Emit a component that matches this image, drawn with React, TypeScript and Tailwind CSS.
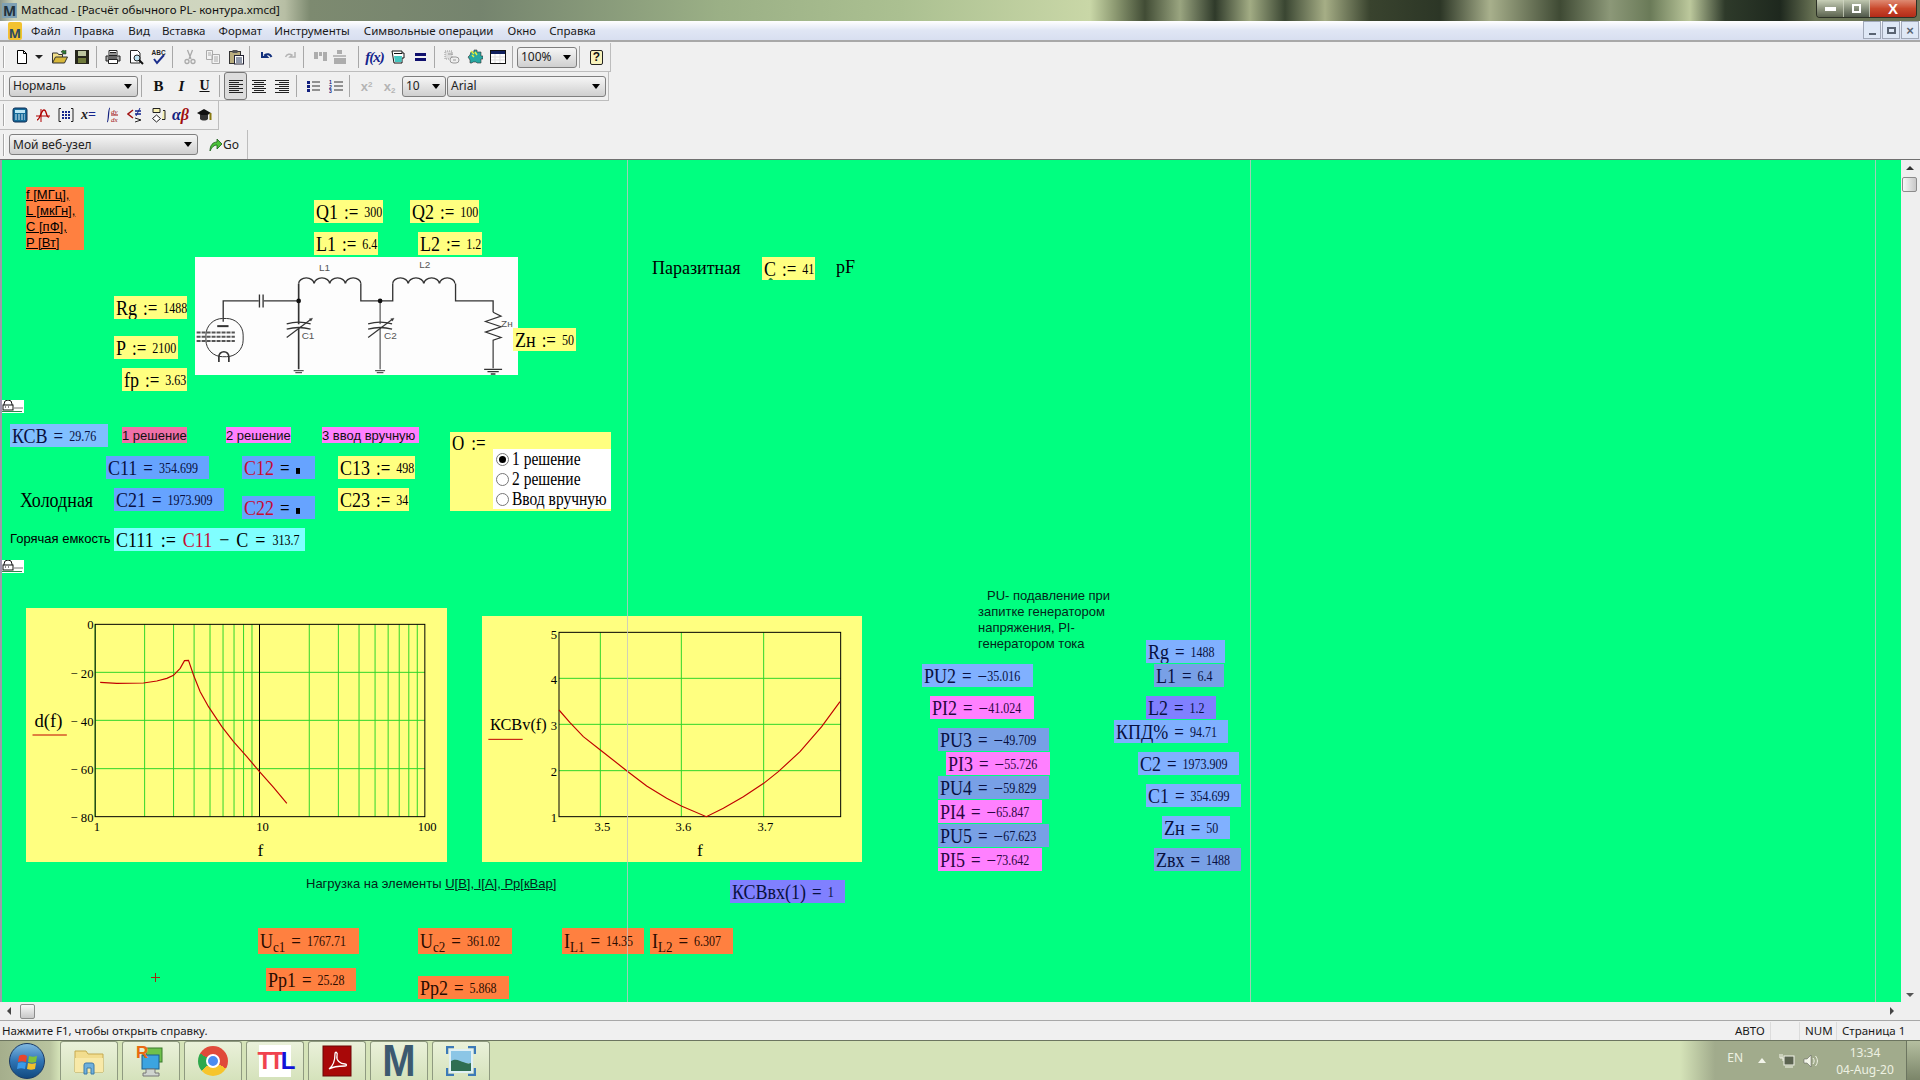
import type { ReactNode } from "react";

const serif = "font-['Liberation_Serif',serif]";
const ui = "font-['Noto_Sans',sans-serif]";
const arial = "font-['Liberation_Sans',Arial,sans-serif]";

function Ico({ children, w = 16, h = 16 }: { children: ReactNode; w?: number; h?: number }) {
  return (
    <svg width={w} height={h} viewBox={`0 0 ${w} ${h}`} className="block">
      {children}
    </svg>
  );
}

function Tool({ children, w = "w-[23px]", className = "" }: { children: ReactNode; w?: string; className?: string }) {
  return <div className={`flex h-full shrink-0 items-center justify-center ${w} ${className}`}>{children}</div>;
}

function Sep({ className = "" }: { className?: string }) {
  return <div className={`h-[22px] w-px shrink-0 self-center bg-[#a8a8a8] ${className}`} />;
}

function Grip() {
  return <div className="ml-[3px] h-[22px] w-[2px] shrink-0 self-center border-l border-[#a8a8a8] bg-white" />;
}

function Combo({ label, className }: { label: string; className: string }) {
  return (
    <div className={`flex h-[21px] shrink-0 items-center justify-between self-center rounded-[3px] border border-[#7f7f7f] bg-gradient-to-b from-[#f6f6f6] to-[#cfcfcf] pl-[3px] pr-[5px] text-[12px] text-[#222] ${ui} ${className}`}>
      <span>{label}</span>
      <span className="h-0 w-0 border-x-[4px] border-t-[5px] border-x-transparent border-t-black" />
    </div>
  );
}

function AlignLines({ mode }: { mode: "l" | "c" | "r" }) {
  const rows = [14, 10, 14, 10, 14, 10, 14];
  return (
    <Ico>
      {rows.map((len, i) => {
        const x = mode === "l" ? 1 : mode === "c" ? 8 - len / 2 : 15 - len;
        return <rect key={i} x={x} y={2 + i * 2} width={len} height={1} fill="#222" />;
      })}
    </Ico>
  );
}

function Toolbars() {
  return (
    <div className="flex h-[117px] shrink-0 flex-col bg-[#f0f0f0] pt-px">
      <div className="flex h-[29px] w-[611px] border-b border-r border-[#bdbdbd]">
        <Grip />
        <Tool className="ml-[5px]">
          <Ico><path d="M3.5 1.5h6l3 3v10h-9z" fill="#fff" stroke="#000" /><path d="M9.5 1.5v3h3" fill="none" stroke="#000" /></Ico>
        </Tool>
        <Tool w="w-[12px]"><span className="h-0 w-0 border-x-[4px] border-t-[4px] border-x-transparent border-t-[#222]" /></Tool>
        <Tool className="ml-[3px]">
          <Ico><path d="M0.5 14V4h5l1 1.5h4V8" fill="#f2e08a" stroke="#333" /><path d="M0.5 14l3-6h12l-3 6z" fill="#d8b83a" stroke="#333" /><path d="M9 3c1-2 3-2 4-1l1-1v4h-4l1.500-1c-1-.5-1.500-.5-2.500-1z" fill="#2e7d32" stroke="#222" strokeWidth=".5" /></Ico>
        </Tool>
        <Tool w="w-[22px]">
          <Ico><rect x="1" y="1" width="14" height="14" fill="#26261c" /><rect x="4" y="2" width="8" height="5" fill="#bdc6a0" /><rect x="4" y="9" width="8" height="5" fill="#6f7a3c" /></Ico>
        </Tool>
        <Sep className="ml-[3px]" />
        <Tool className="ml-[4px]">
          <Ico><path d="M4 1.500h8v5H4z" fill="#fff" stroke="#222" /><path d="M1 7h14v5H1z" fill="#aaa" stroke="#222" /><path d="M3.500 10.500h9v4h-9z" fill="#fff" stroke="#222" /><path d="M3 9h9M5 3.500h6M5 5h6" stroke="#222" /></Ico>
        </Tool>
        <Tool>
          <Ico><path d="M2.500 1.500h7l2.500 2.500v10h-9.500z" fill="#fff" stroke="#222" /><circle cx="9" cy="9" r="3" fill="#bfe4f2" stroke="#222" /><path d="M11 11l4 4" stroke="#111" strokeWidth="2" /></Ico>
        </Tool>
        <Tool>
          <Ico><text x="0.500" y="6" fontSize="6.500" fontWeight="700" fill="#222" fontFamily="Liberation Sans">ABC</text><path d="M3 10l3 4 7-8" fill="none" stroke="#1c2f8c" strokeWidth="2" /></Ico>
        </Tool>
        <Sep className="ml-[2px]" />
        <Tool className="ml-[5px]">
          <Ico><path d="M5.500 1l3.500 9M10.500 1L7 10" stroke="#aaa" strokeWidth="1.300" /><circle cx="5" cy="12.500" r="2" fill="none" stroke="#aaa" strokeWidth="1.300" /><circle cx="11" cy="12.500" r="2" fill="none" stroke="#aaa" strokeWidth="1.300" /></Ico>
        </Tool>
        <Tool>
          <Ico><path d="M1.500 1.500h6v9h-6zM7 5.500h7.500v9H7z" fill="#f3f3f3" stroke="#aaa" /><path d="M3 4h3M3 6h3M9 8h4M9 10h4M9 12h4" stroke="#aaa" /></Ico>
        </Tool>
        <Tool>
          <Ico><rect x="1.500" y="2.500" width="11" height="12" fill="#b9ad7e" stroke="#333" /><rect x="4.500" y="1" width="5" height="3" fill="#555" /><rect x="6.500" y="6.500" width="9" height="8.500" fill="#fff" stroke="#223" /><path d="M8 9h6M8 11h6M8 13h6" stroke="#235" /></Ico>
        </Tool>
        <Sep className="ml-[2px]" />
        <Tool className="ml-[5px]">
          <Ico><path d="M3 3v5h5L6 6c2-1.500 5-1 6.500 2" fill="none" stroke="#12307c" strokeWidth="2" /></Ico>
        </Tool>
        <Tool>
          <Ico><path d="M13 3v5H8l2-2C8 4.500 5 5 3.500 8" fill="none" stroke="#b4b4b4" strokeWidth="1.500" /></Ico>
        </Tool>
        <Sep className="ml-[2px]" />
        <Tool className="ml-[5px]">
          <Ico><rect x="1" y="3" width="4" height="7" fill="#adadad" /><rect x="6" y="3" width="3" height="4" fill="#adadad" /><rect x="10" y="3" width="4" height="9" fill="#adadad" /></Ico>
        </Tool>
        <Tool w="w-[16px]">
          <Ico><rect x="5" y="1" width="5" height="4" fill="#adadad" /><rect x="1" y="6" width="13" height="2" fill="#bcbcbc" /><rect x="2" y="9" width="12" height="6" fill="#adadad" /></Ico>
        </Tool>
        <Sep className="ml-[10px]" />
        <Tool className="ml-[4px]">
          <span className={`text-[15px] font-bold italic leading-none tracking-[-1px] text-[#14248c] ${serif}`}>f(x)</span>
        </Tool>
        <Tool>
          <Ico><path d="M2 2h10v2h2v5h-2v5H4z" fill="#fff" stroke="#111" /><path d="M4 7h8l-.5 6H5z" fill="#44c6c0" /><path d="M4 4.500h8" stroke="#111" /></Ico>
        </Tool>
        <Tool>
          <Ico><rect x="2" y="4" width="11" height="3" fill="#10106e" /><rect x="2" y="9" width="11" height="3" fill="#10106e" /></Ico>
        </Tool>
        <Sep className="ml-[2px]" />
        <Tool className="ml-[5px]">
          <Ico><path d="M1 2h7v8H1z" fill="#ddd" stroke="#999" strokeDasharray="1 1" /><rect x="6" y="8" width="9" height="6" rx="3" fill="#eee" stroke="#999" /><path d="M4 5h5M9 11h3" stroke="#999" /></Ico>
        </Tool>
        <Tool>
          <Ico><path d="M4 3h3V1h3v2h4v4h2v3h-2v4h-4l-1-1H6l-1 1H3v-3L1 8l2-2z" fill="#27a7a2" stroke="#333" strokeWidth=".6" /><path d="M4 2l3 3M8 3l2 3M5 6l2 2" stroke="#e8ef3a" strokeWidth="1.400" /></Ico>
        </Tool>
        <Tool>
          <Ico><rect x="0.500" y="1.500" width="15" height="13" fill="#fff" stroke="#111" /><rect x="1" y="2" width="14" height="3" fill="#10205e" /><path d="M1 8h14M1 11h14M5 5v9M10 5v9" stroke="#ddd" /></Ico>
        </Tool>
        <Sep className="ml-[3px]" />
        <Combo label="100%" className="ml-[4px] w-[60px]" />
        <Sep className="ml-[2px]" />
        <Tool className="ml-[5px]">
          <div className={`flex h-[15px] w-[13px] items-center justify-center rounded-[2px] border border-[#222] bg-[#f7f2bc] text-[12px] font-bold leading-none text-[#111] ${arial}`}>?</div>
        </Tool>
      </div>

      <div className="flex h-[29px] w-[609px] border-b border-r border-[#bdbdbd]">
        <Grip />
        <Combo label="Нормаль" className="ml-[4px] w-[129px]" />
        <Sep className="ml-[3px]" />
        <Tool className="ml-[5px]"><span className={`text-[15px] font-bold leading-none text-[#111] ${serif}`}>B</span></Tool>
        <Tool><span className={`text-[15px] font-bold italic leading-none text-[#111] ${serif}`}>I</span></Tool>
        <Tool><span className={`text-[14px] font-bold leading-none text-[#111] underline ${serif}`}>U</span></Tool>
        <Sep className="ml-[3px]" />
        <Tool className="ml-[4px] h-[22px] self-center rounded-[3px] border border-[#777] bg-[#dcdcdc]"><AlignLines mode="l" /></Tool>
        <Tool><AlignLines mode="c" /></Tool>
        <Tool><AlignLines mode="r" /></Tool>
        <Sep className="ml-[3px]" />
        <Tool className="ml-[4px]">
          <Ico><path d="M2 3h3v3H2zM2 7h3v3H2zM2 11h3v3H2z" fill="#12207e" /><path d="M7 4h8M7 8h8M7 12h8" stroke="#333" /></Ico>
        </Tool>
        <Tool>
          <Ico><text x="1" y="6" fontSize="5" fontWeight="700" fill="#12207e" fontFamily="Liberation Sans">1</text><text x="1" y="10.500" fontSize="5" fontWeight="700" fill="#12207e" fontFamily="Liberation Sans">2</text><text x="1" y="15" fontSize="5" fontWeight="700" fill="#12207e" fontFamily="Liberation Sans">3</text><path d="M6 4h9M6 8h9M6 12h9" stroke="#333" /></Ico>
        </Tool>
        <Sep className="ml-[2px]" />
        <Tool className="ml-[5px]"><span className={`text-[13px] font-bold leading-none text-[#b4b4b4] ${arial}`}>x<sup className="text-[8px]">2</sup></span></Tool>
        <Tool><span className={`text-[13px] font-bold leading-none text-[#b4b4b4] ${arial}`}>x<sub className="text-[8px]">2</sub></span></Tool>
        <Combo label="10" className="ml-[1px] w-[44px]" />
        <Combo label="Arial" className="ml-[1px] w-[159px]" />
      </div>

      <div className="flex h-[29px] w-[219px] border-b border-r border-[#bdbdbd]">
        <Grip />
        <Tool className="ml-[3px]">
          <Ico><rect x="1" y="1" width="14" height="14" rx="2" fill="#166a9a" stroke="#0c2c55" /><rect x="3" y="3" width="10" height="3" fill="#bfe6f5" /><path d="M3 8h10M3 10h10M3 12h10" stroke="#d8edf5" strokeDasharray="2 1" /></Ico>
        </Tool>
        <Tool>
          <Ico><path d="M1 9h14M6 2v13" stroke="#b00000" /><path d="M2 13C5 13 6 3 9 3s2 8 5 7" fill="none" stroke="#b00000" strokeWidth="1.300" /></Ico>
        </Tool>
        <Tool>
          <Ico><path d="M3 1.500H1v13h2M13 1.500h2v13h-2" fill="none" stroke="#222" /><path d="M4 4h2v2H4zM7 4h2v2H7zM10 4h2v2h-2zM4 7h2v2H4zM7 7h2v2H7zM10 7h2v2h-2zM4 10h2v2H4zM7 10h2v2H7zM10 10h2v2h-2z" fill="#14248c" /></Ico>
        </Tool>
        <Tool>
          <span className={`text-[14px] font-bold italic leading-none text-[#222] ${serif}`}>x<span className="not-italic text-[#14248c]">=</span></span>
        </Tool>
        <Tool>
          <Ico><path d="M6 1c-2 0-1 14-3 14" fill="none" stroke="#12207e" strokeWidth="1.200" /><text x="7" y="7" fontSize="7" fill="#a01010" fontFamily="Liberation Serif" fontStyle="italic">dy</text><path d="M7 8h7" stroke="#a01010" /><text x="7" y="15" fontSize="7" fill="#a01010" fontFamily="Liberation Serif" fontStyle="italic">dx</text></Ico>
        </Tool>
        <Tool>
          <Ico><path d="M6 3L1 7l5 4" fill="none" stroke="#a01010" strokeWidth="1.500" /><path d="M8 4h6M8 7h6" stroke="#14248c" strokeWidth="1.500" /><path d="M13 1L9 9" stroke="#14248c" /><path d="M8 11l6 2-6 2" fill="none" stroke="#222" /></Ico>
        </Tool>
        <Tool>
          <Ico><path d="M3 1.500h7v4H3zM13 3.500h2v9h-3" fill="#f7efb0" stroke="#222" /><path d="M6.500 8l4 3.500-4 3.500-4-3.500z" fill="#fff" stroke="#222" /></Ico>
        </Tool>
        <Tool>
          <span className={`text-[16px] font-bold italic leading-none text-[#12207e] ${serif}`}>α<span className="text-[#a01010]">β</span></span>
        </Tool>
        <Tool>
          <Ico><path d="M8 2l7 4-7 4-7-4z" fill="#111" /><path d="M4 8v4c2 2 6 2 8 0V8" fill="#333" /><path d="M14.500 6v7" stroke="#8a7a10" strokeWidth="2" /></Ico>
        </Tool>
      </div>

      <div className="flex h-[29px] w-[248px] border-r border-[#bdbdbd]">
        <Grip />
        <Combo label="Мой веб-узел" className="ml-[4px] w-[189px]" />
        <Tool w="w-[15px]" className="ml-[10px]">
          <Ico w={15}><path d="M2 14c0-6 3-9 7-9V2l5 5-5 5V8C6 8 4 10 2 14z" fill="#4cc23a" stroke="#1a5c1a" strokeWidth=".8" /></Ico>
        </Tool>
        <span className={`self-center text-[12px] text-[#222] ${ui}`}>Go</span>
      </div>
    </div>
  );
}

function Region({ box, name, sub, op = "=", val, nameColor = "", text = "text-black", mark }: {
  box: string;
  name: string;
  sub?: string;
  op?: string;
  val?: string;
  nameColor?: string;
  text?: string;
  mark?: boolean;
}) {
  const neg = val?.startsWith("−");
  return (
    <div className={`absolute flex items-center overflow-hidden pl-[2px] ${box} ${text} ${serif}`}>
      <div className="flex scale-y-[1.18] items-center gap-[6px] whitespace-nowrap">
        <span className={`text-[18px] leading-none ${nameColor}`}>
          {name}
          {sub && <sub className="text-[13px] leading-none">{sub}</sub>}
        </span>
        <span className="text-[17px] leading-none">{op}</span>
        {mark && <span className="mt-[5px] h-[5px] w-[4px] bg-black" />}
        {val && (
          <span className="flex items-center text-[12px] leading-none">
            {neg && <span className="text-[17px] leading-none">−</span>}
            {neg ? val.slice(1) : val}
          </span>
        )}
      </div>
    </div>
  );
}

function Lock({ className }: { className: string }) {
  return (
    <div className={`absolute h-[13px] w-[22px] bg-white ${className}`}>
      <svg width="22" height="13" viewBox="0 0 22 13" className="block">
        <path d="M2 10V4a4 4 0 0 1 8 0v6" fill="none" stroke="#111" />
        <rect x="1" y="5" width="10" height="5" fill="#fff" stroke="#111" />
        <path d="M3 7h1M6 7h1" stroke="#111" />
        <path d="M12 8h9" stroke="#777" />
        <path d="M0 12l1-1 1 1 1-1 1 1 1-1 1 1 1-1 1 1 1-1 1 1 1-1 1 1 1-1 1 1 1-1 1 1 1-1 1 1 1-1 1 1" fill="none" stroke="#2c8a4c" />
      </svg>
    </div>
  );
}

function Circuit() {
  const hump = (x: number) => `M${x} 100 a23 17 0 0 1 46 0 M${x + 47} 100 a23 17 0 0 1 46 0 M${x + 94} 100 a23 17 0 0 1 46 0 M${x + 141} 100 a23 17 0 0 1 46 0`;
  const cap = (x: number, w: number) => (
    <g stroke="#333" fill="none">
      <path d={`M${x - 36} 221q36 -10 72 0M${x - 36} 237q36 -10 72 0`} strokeWidth="4" />
      <path d={`M${x - 36} 262L${x + 36} 208`} strokeWidth="3.500" />
      <path d={`M${x + 42} 204l-10 2 5 7z`} fill="#333" />
      <path d={`M${x} 152V222M${x} 234V358`} strokeWidth={w} />
      <path d={`M${x - 15} 362h30M${x - 10} 368h20`} strokeWidth="4" stroke="#555" />
    </g>
  );
  return (
    <svg viewBox="15 20 968 355" width="323" height="118" className="absolute left-[195px] top-[97px] bg-[#fdfdfd]">
      <g fill="none" stroke="#333" strokeWidth="4">
        <path d="M98 215V152H205M220 152H325M512 100V152H608V100M797 100V152H910V186" />
        <path d="M325 152V100" strokeWidth="5" />
        <path d="M207 133V172M218 133V172" />
        <path d={hump(325)} />
        <path d={hump(608)} />
        <path d="M910 186l24 12-47 16 47 16-47 16 47 16-24 8V355" strokeWidth="3.500" />
        <path d="M883 358h54M893 365h34M903 372h14" />
        <rect x="46" y="205" width="112" height="115" rx="50" strokeWidth="3" />
        <path d="M80 228h34" strokeWidth="6" />
        <path d="M18 247H133M18 260H133M18 273H133" strokeWidth="6" strokeDasharray="12 3" stroke="#555" />
        <path d="M85 336V320a15 15 0 0 1 30 0V336" strokeWidth="5" />
      </g>
      {cap(325, 5)}
      {cap(570, 3)}
      <circle cx="325" cy="152" r="7" fill="#111" />
      <circle cx="570" cy="152" r="7" fill="#111" />
      <g fontFamily="Liberation Sans" fontSize="30" fill="#555">
        <text x="386" y="62">L1</text>
        <text x="688" y="54">L2</text>
        <text x="334" y="268">C1</text>
        <text x="582" y="267">C2</text>
        <text x="934" y="230">Zн</text>
      </g>
    </svg>
  );
}

function PlotD() {
  const log = [1, 2, 3, 4, 5, 6, 7, 8, 9];
  const curve = "300,277 350,280 430,279 470,273 500,265 520,256 540,235 553,212 565,211 580,255 600,305 625,350 665,410 700,455 740,500 778,545 820,592 860,640";
  return (
    <svg viewBox="78 54 1262 762" width="421" height="254" className="absolute left-[26px] top-[448px] bg-[#ffff80]">
      <g stroke="#2fd62a" strokeWidth="3" fill="none">
        {log.map((n) => (
          <g key={n}>
            <path d={`M${285 + Math.log10(n) * 493} 103V680`} />
            <path d={`M${778 + Math.log10(n) * 496} 103V680`} />
          </g>
        ))}
        <path d="M285 247H1274M285 391H1274M285 536H1274" />
      </g>
      <path d="M778 103V680" stroke="#000" strokeWidth="3" />
      <rect x="285" y="103" width="989" height="577" fill="none" stroke="#000" strokeWidth="3" />
      <polyline points={curve} fill="none" stroke="#c00000" strokeWidth="3.500" />
      <path d="M97 435H200" stroke="#c00000" strokeWidth="3" />
      <g fontFamily="Liberation Serif" fontSize="38" fill="#000" textAnchor="end">
        <text x="280" y="118">0</text>
        <text x="280" y="263">− 20</text>
        <text x="280" y="408">− 40</text>
        <text x="280" y="552">− 60</text>
        <text x="280" y="697">− 80</text>
      </g>
      <g fontFamily="Liberation Serif" fontSize="38" fill="#000" textAnchor="middle">
        <text x="290" y="723">1</text>
        <text x="787" y="723">10</text>
        <text x="1281" y="723">100</text>
      </g>
      <text x="781" y="798" textAnchor="middle" fontFamily="Liberation Serif" fontSize="52" fill="#000">f</text>
      <text x="145" y="410" textAnchor="middle" fontFamily="Liberation Serif" fontSize="56" fill="#000">d(f)</text>
    </svg>
  );
}

function PlotK() {
  const curve = "267,330 300,368 340,410 391,450 470,512 530,558 590,595 634,618 709,650 760,625 820,590 881,550 925,515 990,455 1055,380 1110,305";
  return (
    <svg viewBox="36 48 1140 738" width="380" height="246" className="absolute left-[482px] top-[456px] bg-[#ffff80]">
      <path d="M391 97V650M634 97V650M881 97V650M267 235H1112M267 373H1112M267 512H1112" stroke="#2fd62a" strokeWidth="3" fill="none" />
      <rect x="267" y="97" width="845" height="553" fill="none" stroke="#000" strokeWidth="3" />
      <polyline points={curve} fill="none" stroke="#c00000" strokeWidth="3.500" />
      <path d="M55 418H158" stroke="#c00000" strokeWidth="3" />
      <g fontFamily="Liberation Serif" fontSize="38" fill="#000" textAnchor="middle">
        <text x="252" y="116">5</text>
        <text x="252" y="253">4</text>
        <text x="252" y="391">3</text>
        <text x="252" y="529">2</text>
        <text x="252" y="667">1</text>
        <text x="397" y="693">3.5</text>
        <text x="640" y="693">3.6</text>
        <text x="886" y="693">3.7</text>
      </g>
      <text x="690" y="768" textAnchor="middle" fontFamily="Liberation Serif" fontSize="52" fill="#000">f</text>
      <text x="60" y="391" fontFamily="Liberation Serif" fontSize="49" fill="#000">КСВv(f)</text>
    </svg>
  );
}

function Radio({ label, on }: { label: string; on?: boolean }) {
  return (
    <div className="flex h-[20px] items-center gap-[3px]">
      <span className="flex h-[13px] w-[13px] shrink-0 items-center justify-center rounded-full border border-[#777] bg-white">
        {on && <span className="h-[7px] w-[7px] rounded-full bg-black" />}
      </span>
      <span className="scale-y-[1.18] whitespace-nowrap text-[15.5px] leading-none text-black">{label}</span>
    </div>
  );
}

function Worksheet() {
  const blue = "bg-[#66a3ff]";
  const pale = "bg-[#80b0ff]";
  const slate = "bg-[#78a0e6]";
  const mag = "bg-[#ff80ff]";
  const yel = "bg-[#ffff80]";
  const org = "bg-[#ff8040]";
  const navy = "text-[#081040]";
  const plum = "text-[#2a0640]";
  return (
    <div className="relative h-full min-w-0 flex-1 overflow-hidden bg-[#00ff80] shadow-[inset_2px_0_0_#9d9dac]">
      <div className={`absolute left-[26px] top-[27px] h-[63px] w-[58px] bg-[#ff8040] text-[13px] leading-[16px] text-black underline ${arial}`}>
        <div>f [МГц],</div>
        <div>L [мкГн],</div>
        <div>C [пФ],</div>
        <div>P [Вт]</div>
      </div>

      <Region box={`left-[314px] top-[40px] w-[69px] h-[23px] ${yel}`} name="Q1" op=":=" val="300" />
      <Region box={`left-[410px] top-[40px] w-[69px] h-[23px] ${yel}`} name="Q2" op=":=" val="100" />
      <Region box={`left-[314px] top-[72px] w-[64px] h-[23px] ${yel}`} name="L1" op=":=" val="6.4" />
      <Region box={`left-[418px] top-[72px] w-[64px] h-[23px] ${yel}`} name="L2" op=":=" val="1.2" />
      <Circuit />
      <Region box={`left-[114px] top-[136px] w-[73px] h-[23px] ${yel}`} name="Rg" op=":=" val="1488" />
      <Region box={`left-[114px] top-[176px] w-[64px] h-[23px] ${yel}`} name="P" op=":=" val="2100" />
      <Region box={`left-[122px] top-[208px] w-[65px] h-[23px] ${yel}`} name="fp" op=":=" val="3.63" />
      <Region box={`left-[513px] top-[168px] w-[63px] h-[23px] ${yel}`} name="Zн" op=":=" val="50" />

      <div className={`absolute left-[652px] top-[97px] scale-y-[1.1] text-[18px] leading-[20px] text-black ${serif}`}>Паразитная</div>
      <Region box={`left-[762px] top-[97px] w-[53px] h-[23px] ${yel}`} name="C" op=":=" val="41" nameColor="underline decoration-wavy decoration-[#2c8a4c]" />
      <div className={`absolute left-[836px] top-[97px] text-[18px] leading-[20px] text-black ${serif}`}>pF</div>

      <Lock className="left-[2px] top-[240px]" />

      <Region box={`left-[10px] top-[264px] w-[98px] h-[23px] bg-[#80bfff]`} name="КСВ" val="29.76" text={navy} />
      <div className={`absolute left-[122px] top-[267px] flex h-[16px] w-[65px] items-center bg-[#f070a8] text-[13px] leading-none text-[#111] ${arial}`}>1 решение</div>
      <div className={`absolute left-[226px] top-[267px] flex h-[16px] w-[65px] items-center ${mag} text-[13px] leading-none text-[#111] ${arial}`}>2 решение</div>
      <div className={`absolute left-[322px] top-[267px] flex h-[16px] w-[97px] items-center ${mag} text-[13px] leading-none text-[#111] ${arial}`}>3 ввод вручную</div>

      <Region box={`left-[106px] top-[296px] w-[103px] h-[23px] ${blue}`} name="C11" val="354.699" text={navy} />
      <Region box={`left-[242px] top-[296px] w-[73px] h-[23px] ${blue}`} name="C12" nameColor="text-[#c80a32]" mark />
      <Region box={`left-[338px] top-[296px] w-[77px] h-[23px] ${yel}`} name="C13" op=":=" val="498" />
      <div className={`absolute left-[20px] top-[330px] scale-y-[1.15] text-[18px] leading-[20px] text-black ${serif}`}>Холодная</div>
      <Region box={`left-[114px] top-[328px] w-[110px] h-[23px] ${blue}`} name="C21" val="1973.909" text={navy} />
      <Region box={`left-[242px] top-[336px] w-[73px] h-[23px] ${blue}`} name="C22" nameColor="text-[#c80a32]" mark />
      <Region box={`left-[338px] top-[328px] w-[71px] h-[23px] ${yel}`} name="C23" op=":=" val="34" />

      <div className={`absolute left-[450px] top-[272px] h-[79px] w-[161px] ${yel} ${serif}`}>
        <div className="ml-[2px] mt-[1px] flex h-[16px] origin-top-left scale-y-[1.18] items-center gap-[7px] text-[17px] leading-none text-black">
          <span>O</span>
          <span>:=</span>
        </div>
        <div className="absolute bottom-[2px] left-[43px] right-0 top-[17px] flex flex-col bg-white pl-[3px]">
          <Radio label="1 решение" on />
          <Radio label="2 решение" />
          <Radio label="Ввод вручную" />
        </div>
      </div>

      <div className={`absolute left-[10px] top-[371px] text-[13px] leading-[16px] text-black ${arial}`}>Горячая емкость</div>
      <div className={`absolute left-[114px] top-[368px] flex h-[23px] w-[191px] items-center bg-[#80ffff] pl-[2px] text-black ${serif}`}>
        <div className="flex scale-y-[1.18] items-center gap-[7px] whitespace-nowrap text-[18px] leading-none">
          <span>C111</span>
          <span>:=</span>
          <span className="text-[#c80a32]">C11</span>
          <span>−</span>
          <span>C</span>
          <span>=</span>
          <span className="text-[12px]">313.7</span>
        </div>
      </div>
      <Lock className="left-[2px] top-[400px]" />

      <PlotD />
      <PlotK />

      <div className={`absolute left-[978px] top-[428px] w-[145px] text-[13px] leading-[16px] text-[#03261a] ${arial}`}>
        <div className="pl-[9px]">PU- подавление при</div>
        <div>запитке генератором</div>
        <div>напряжения, PI-</div>
        <div>генератором тока</div>
      </div>

      <Region box={`left-[922px] top-[504px] w-[111px] h-[23px] ${pale}`} name="PU2" val="−35.016" text={navy} />
      <Region box={`left-[930px] top-[536px] w-[104px] h-[23px] ${mag}`} name="PI2" val="−41.024" text={plum} />
      <Region box={`left-[938px] top-[568px] w-[111px] h-[23px] ${slate}`} name="PU3" val="−49.709" text={navy} />
      <Region box={`left-[946px] top-[592px] w-[104px] h-[23px] ${mag}`} name="PI3" val="−55.726" text={plum} />
      <Region box={`left-[938px] top-[616px] w-[111px] h-[23px] ${slate}`} name="PU4" val="−59.829" text={navy} />
      <Region box={`left-[938px] top-[640px] w-[104px] h-[23px] ${mag}`} name="PI4" val="−65.847" text={plum} />
      <Region box={`left-[938px] top-[664px] w-[111px] h-[23px] ${slate}`} name="PU5" val="−67.623" text={navy} />
      <Region box={`left-[938px] top-[688px] w-[104px] h-[23px] ${mag}`} name="PI5" val="−73.642" text={plum} />

      <Region box={`left-[1146px] top-[480px] w-[79px] h-[23px] ${pale}`} name="Rg" val="1488" text={navy} />
      <Region box={`left-[1154px] top-[504px] w-[70px] h-[23px] ${slate}`} name="L1" val="6.4" text={navy} />
      <Region box={`left-[1146px] top-[536px] w-[70px] h-[23px] bg-[#8080ff]`} name="L2" val="1.2" text={navy} />
      <Region box={`left-[1114px] top-[560px] w-[114px] h-[23px] ${pale}`} name="КПД%" val="94.71" text={navy} />
      <Region box={`left-[1138px] top-[592px] w-[101px] h-[23px] ${pale}`} name="C2" val="1973.909" text={navy} />
      <Region box={`left-[1146px] top-[624px] w-[95px] h-[23px] ${pale}`} name="C1" val="354.699" text={navy} />
      <Region box={`left-[1162px] top-[656px] w-[68px] h-[23px] ${pale}`} name="Zн" val="50" text={navy} />
      <Region box={`left-[1154px] top-[688px] w-[87px] h-[23px] ${slate}`} name="Zвх" val="1488" text={navy} />

      <div className={`absolute left-[306px] top-[716px] whitespace-nowrap text-[13px] leading-[16px] text-[#03261a] ${arial}`}>
        Нагрузка на элементы <span className="underline">U[B], I[A], Pp[кВар]</span>
      </div>
      <Region box={`left-[730px] top-[720px] w-[115px] h-[23px] bg-[#8080ff]`} name="КСВвх(1)" val="1" text={navy} />

      <Region box={`left-[258px] top-[768px] w-[101px] h-[26px] ${org}`} name="U" sub="c1" val="1767.71" text="text-[#2a0c00]" />
      <Region box={`left-[418px] top-[768px] w-[94px] h-[26px] ${org}`} name="U" sub="c2" val="361.02" text="text-[#2a0c00]" />
      <Region box={`left-[562px] top-[768px] w-[82px] h-[26px] ${org}`} name="I" sub="L1" val="14.35" text="text-[#2a0c00]" />
      <Region box={`left-[650px] top-[768px] w-[83px] h-[26px] ${org}`} name="I" sub="L2" val="6.307" text="text-[#2a0c00]" />
      <Region box={`left-[266px] top-[808px] w-[90px] h-[23px] ${org}`} name="Pp1" val="25.28" text="text-[#2a0c00]" />
      <Region box={`left-[418px] top-[816px] w-[91px] h-[23px] ${org}`} name="Pp2" val="5.868" text="text-[#2a0c00]" />

      <svg width="9" height="9" viewBox="0 0 9 9" className="absolute left-[151px] top-[813px]">
        <path d="M4.500 0V9M0 4.500H9" stroke="#a02a10" />
      </svg>

      <div className="absolute bottom-0 left-[627px] top-0 z-10 w-px bg-[#c4c4c4]/80" />
      <div className="absolute bottom-0 left-[1250px] top-0 z-10 w-px bg-[#c4c4c4]/80" />
      <div className="absolute bottom-0 left-[1875px] top-0 z-10 w-px bg-[#c4c4c4]/80" />
    </div>
  );
}

function TaskBtn({ children }: { children: ReactNode }) {
  return (
    <div className="flex h-full w-[58px] shrink-0 items-center justify-center rounded-t-[3px] border border-b-0 border-[#8f9a80] bg-gradient-to-b from-[#eaf1da] to-[#d5e2bb]">
      {children}
    </div>
  );
}

function Taskbar() {
  return (
    <div className="flex h-[40px] shrink-0 items-stretch border-t border-[#6c7560] bg-[linear-gradient(90deg,#a5ae8c_0,#b9c49f_50px,#d5e3b8_60px,#d5e3b8_1680px,#a1ab8c_1715px,#a1ab8c_100%)]">
      <div className="flex w-[60px] shrink-0 items-center pl-[9px]">
        <div className="relative h-[36px] w-[36px] overflow-hidden rounded-full border border-[#1a3a66] bg-gradient-to-b from-[#7fb8e0] via-[#2f74b4] to-[#124a80]">
          <svg width="36" height="36" viewBox="0 0 36 36" className="block">
            <path d="M9 12c3-2 6-1 8 0l-1 6c-3-1-5-1-8 0z" fill="#e8452c" />
            <path d="M19 12c3 1 5 1 8 0l-1 6c-3 1-5 1-8 0z" fill="#7fc23a" />
            <path d="M8 19c3-1 5-1 8 0l-1 6c-3-1-5-1-8 0z" fill="#3a9ae8" />
            <path d="M18 19c3 1 5 1 8 0l-1 6c-3 1-5 1-8 0z" fill="#f2c02c" />
          </svg>
        </div>
      </div>
      <div className="flex items-stretch gap-[4px]">
        <TaskBtn>
          <svg width="32" height="32" viewBox="0 0 32 32" className="block">
            <path d="M2 6h11l2 3h15v18H2z" fill="#f2dd8e" stroke="#c6a94e" />
            <path d="M2 13h28v14H2z" fill="#f8e9a8" />
            <path d="M11 29V20a2 2 0 0 1 2-2h6a2 2 0 0 1 2 2v9h-3v-6h-4v6z" fill="#6fb0dc" stroke="#3c7aa8" />
          </svg>
        </TaskBtn>
        <TaskBtn>
          <svg width="32" height="36" viewBox="0 0 32 36" className="block">
            <rect x="11" y="5" width="16" height="14" fill="#6fc04c" stroke="#3a7a2c" />
            <rect x="7" y="12" width="17" height="14" fill="#3ca4e0" stroke="#1c5c8c" />
            <path d="M11 26h9v4h4v3H8v-3h3z" fill="#cfd4cf" stroke="#777" />
            <text x="1" y="15" fontSize="17" fontWeight="700" fontFamily="Liberation Sans" fill="#e86a10">R</text>
          </svg>
        </TaskBtn>
        <TaskBtn>
          <div className="relative h-[30px] w-[30px] rounded-full bg-[conic-gradient(#e04a3a_0deg,#e04a3a_120deg,#f6c52c_120deg,#f6c52c_230deg,#2ea84c_230deg,#2ea84c_300deg,#e04a3a_300deg)]">
            <div className="absolute left-[8px] top-[8px] h-[14px] w-[14px] rounded-full border-2 border-white bg-[#4a8cf0]" />
          </div>
        </TaskBtn>
        <TaskBtn>
          <div className={`flex h-[32px] w-[32px] items-center justify-center bg-white text-[24px] font-bold leading-none tracking-[-3px] ${arial}`}>
            <span className="text-[#f0434f]">TT</span>
            <span className="text-[#1212d8]">L</span>
          </div>
        </TaskBtn>
        <TaskBtn>
          <svg width="30" height="32" viewBox="0 0 30 32" className="block">
            <rect x="1" y="1" width="28" height="30" fill="#a80808" stroke="#6a0606" />
            <path d="M7 24c4-3 6-9 6-15 0-3 3-2 2 2s3 8 8 8c2 0 2 2 0 2-5 0-11 0-16 3z" fill="none" stroke="#fff" strokeWidth="1.300" />
          </svg>
        </TaskBtn>
        <TaskBtn>
          <span className={`origin-center scale-y-[1.1] text-[40px] font-bold leading-none text-[#3c5a70] ${arial}`}>M</span>
        </TaskBtn>
        <TaskBtn>
          <svg width="30" height="30" viewBox="0 0 30 30" className="block">
            <rect x="3" y="3" width="24" height="24" fill="#dff0f5" />
            <path d="M5 5h20v12H5z" fill="#8cc6e6" />
            <path d="M5 25V15c5-3 9 0 12 1s5 2 8 1v8z" fill="#2f6e52" />
            <path d="M1 8V1h7M22 1h7v7M29 22v7h-7M8 29H1v-7" fill="none" stroke="#3c7ab8" strokeWidth="2.500" />
          </svg>
        </TaskBtn>
      </div>
      <div className="flex-1" />
      <div className={`mr-[11px] flex items-center text-[12px] text-[#eef1e2] ${ui}`}>
        <span className="mb-[6px]">EN</span>
        <span className="ml-[15px] h-0 w-0 border-x-[4px] border-b-[5px] border-x-transparent border-b-[#f2f4ea]" />
        <svg width="16" height="16" viewBox="0 0 16 16" className="ml-[13px] block">
          <rect x="5" y="3" width="10" height="9" fill="#5b6350" stroke="#f4f6ea" />
          <path d="M3 1v4M1 1v4M1 5h3v3" stroke="#f4f6ea" fill="none" />
          <path d="M6 14h8" stroke="#f4f6ea" />
        </svg>
        <svg width="16" height="16" viewBox="0 0 16 16" className="ml-[8px] block">
          <path d="M1 6h3l4-4v12l-4-4H1z" fill="#f4f6ea" stroke="#555" strokeWidth=".5" />
          <path d="M10 5c1.500 2 1.500 4 0 6M12.500 3c2.500 3 2.500 7 0 10" fill="none" stroke="#f4f6ea" />
        </svg>
      </div>
      <div className={`mr-[6px] flex w-[70px] flex-col items-center justify-center text-[12px] leading-[17px] text-[#eef1e2] ${ui}`}>
        <span>13:34</span>
        <span>04-Aug-20</span>
      </div>
      <div className="w-[14px] shrink-0 border-l border-[#6c7560] bg-gradient-to-b from-[#b5bfa0] to-[#7b8569]" />
    </div>
  );
}

export default function App() {
  return (
    <div className={`flex h-[1080px] w-[1920px] flex-col overflow-hidden bg-[#f0f0f0] ${ui}`}>
      <div className="flex h-[21px] shrink-0 items-start bg-[linear-gradient(90deg,#8c978c_0,#cbd2ba_14px,#d0d6c0_240px,#b7bea4_285px,#7d8a70_310px,#75846e_480px,#9bb086_720px,#abc091_900px,#c9d7a7_1090px,#8d9a72_1115px,#414c35_1145px,#9aa580_1180px,#2f3a2a_1215px,#a2ac84_1250px,#3a4632_1285px,#a6ae86_1325px,#39432e_1370px,#2c3626_1440px,#a8b08c_1490px,#3f4a34_1560px,#8c9878_1610px,#6a7a58_1650px,#bcc89c_1690px,#2e3a2a_1725px,#1e281e_1780px,#6b7556_1815px,#6b7556_100%)]">
        <div className="ml-[2px] mt-[3px] flex h-[15px] w-[15px] items-center justify-center bg-[#7ea0b4] text-[14px] font-bold leading-none text-[#22323c]">M</div>
        <span className="ml-[4px] mt-[1px] whitespace-nowrap text-[11.5px] leading-[18px] text-[#111]">Mathcad - [Расчёт обычного PL- контура.xmcd]</span>
        <div className="ml-auto mr-[3px] flex h-[18px] overflow-hidden rounded-b-[4px] border border-t-0 border-[#2c3026]">
          <div className="flex w-[27px] items-center justify-center border-r border-[#d4d8c8]/70 bg-gradient-to-b from-[#c8cfb8] to-[#5c6450]">
            <span className="h-[4px] w-[11px] bg-white" />
          </div>
          <div className="flex w-[26px] items-center justify-center border-r border-[#d4d8c8]/70 bg-gradient-to-b from-[#c0c8b0] to-[#50584a]">
            <span className="relative h-[9px] w-[9px] border-2 border-white" />
          </div>
          <div className={`flex w-[46px] items-center justify-center bg-gradient-to-b from-[#de8a72] via-[#c9482c] to-[#b22a18] text-[15px] font-bold leading-none text-white ${arial}`}>X</div>
        </div>
      </div>

      <div className="flex h-[21px] shrink-0 items-center border-b-2 border-[#a8a8a8] bg-gradient-to-b from-[#ffffff] via-[#e0e6f4] to-[#d8dff0] text-[11.5px] text-[#1a1a1a]">
        <div className="ml-[8px] flex h-[18px] w-[14px] items-end justify-center rounded-[2px] bg-[#f2c230] text-[13px] font-bold leading-none text-[#2c4a60]">M</div>
        <span className="ml-[9px]">Файл</span>
        <span className="ml-[13px]">Правка</span>
        <span className="ml-[14px]">Вид</span>
        <span className="ml-[12px]">Вставка</span>
        <span className="ml-[13px]">Формат</span>
        <span className="ml-[12px]">Инструменты</span>
        <span className="ml-[14px]">Символьные операции</span>
        <span className="ml-[14px]">Окно</span>
        <span className="ml-[13px]">Справка</span>
        <div className="ml-auto flex h-full items-start gap-px pr-px">
          <div className="flex h-[18px] w-[18px] items-end justify-center border border-[#a0a8b8] bg-[#dfe8f6] pb-[3px]"><span className="h-[2px] w-[7px] bg-[#5a6472]" /></div>
          <div className="flex h-[18px] w-[18px] items-center justify-center border border-[#a0a8b8] bg-[#dfe8f6]"><span className="h-[7px] w-[9px] border-2 border-[#5a6472]" /></div>
          <div className={`flex h-[18px] w-[18px] items-center justify-center border border-[#a0a8b8] bg-[#dfe8f6] text-[13px] font-bold leading-none text-[#5a6472] ${arial}`}>×</div>
        </div>
      </div>

      <Toolbars />

      <div className="h-px shrink-0 bg-[#707070]" />

      <div className="flex h-[842px] shrink-0">
        <Worksheet />
        <div className="flex w-[19px] shrink-0 flex-col items-center bg-[#efefef] pr-[2px] pt-[6px]">
          <span className="h-0 w-0 border-x-[4px] border-b-[4px] border-x-transparent border-b-[#333]" />
          <div className="mt-[7px] h-[15px] w-[15px] rounded-[2px] border border-[#8c8c8c] bg-gradient-to-r from-[#f8f8f8] to-[#c8c8c8]" />
          <div className="flex-1" />
          <span className="mb-[5px] h-0 w-0 border-x-[4px] border-t-[4px] border-x-transparent border-t-[#555]" />
        </div>
      </div>

      <div className="flex h-[18px] shrink-0 items-center bg-[#efefef]">
        <span className="ml-[7px] h-0 w-0 border-y-[4px] border-r-[4px] border-y-transparent border-r-[#444]" />
        <div className="ml-[9px] h-[15px] w-[15px] rounded-[2px] border border-[#8c8c8c] bg-gradient-to-b from-[#f8f8f8] to-[#c8c8c8]" />
        <span className="ml-auto mr-[26px] h-0 w-0 border-y-[4px] border-l-[4px] border-y-transparent border-l-[#444]" />
      </div>

      <div className="flex h-[20px] shrink-0 items-center border-t border-[#a8a8a8] bg-[#f0f0f0] pt-px text-[11.5px] text-[#1a1a1a]">
        <span className="ml-[2px]">Нажмите F1, чтобы открыть справку.</span>
        <span className="ml-auto w-[35px]">АВТО</span>
        <div className="h-full w-[30px] border-x border-[#dcdcdc]" />
        <span className="w-[36px] pl-[5px]">NUM</span>
        <div className="h-full w-px bg-[#dcdcdc]" />
        <span className="ml-[5px] mr-[18px] w-[60px] whitespace-nowrap">Страница 1</span>
      </div>

      <Taskbar />
    </div>
  );
}
